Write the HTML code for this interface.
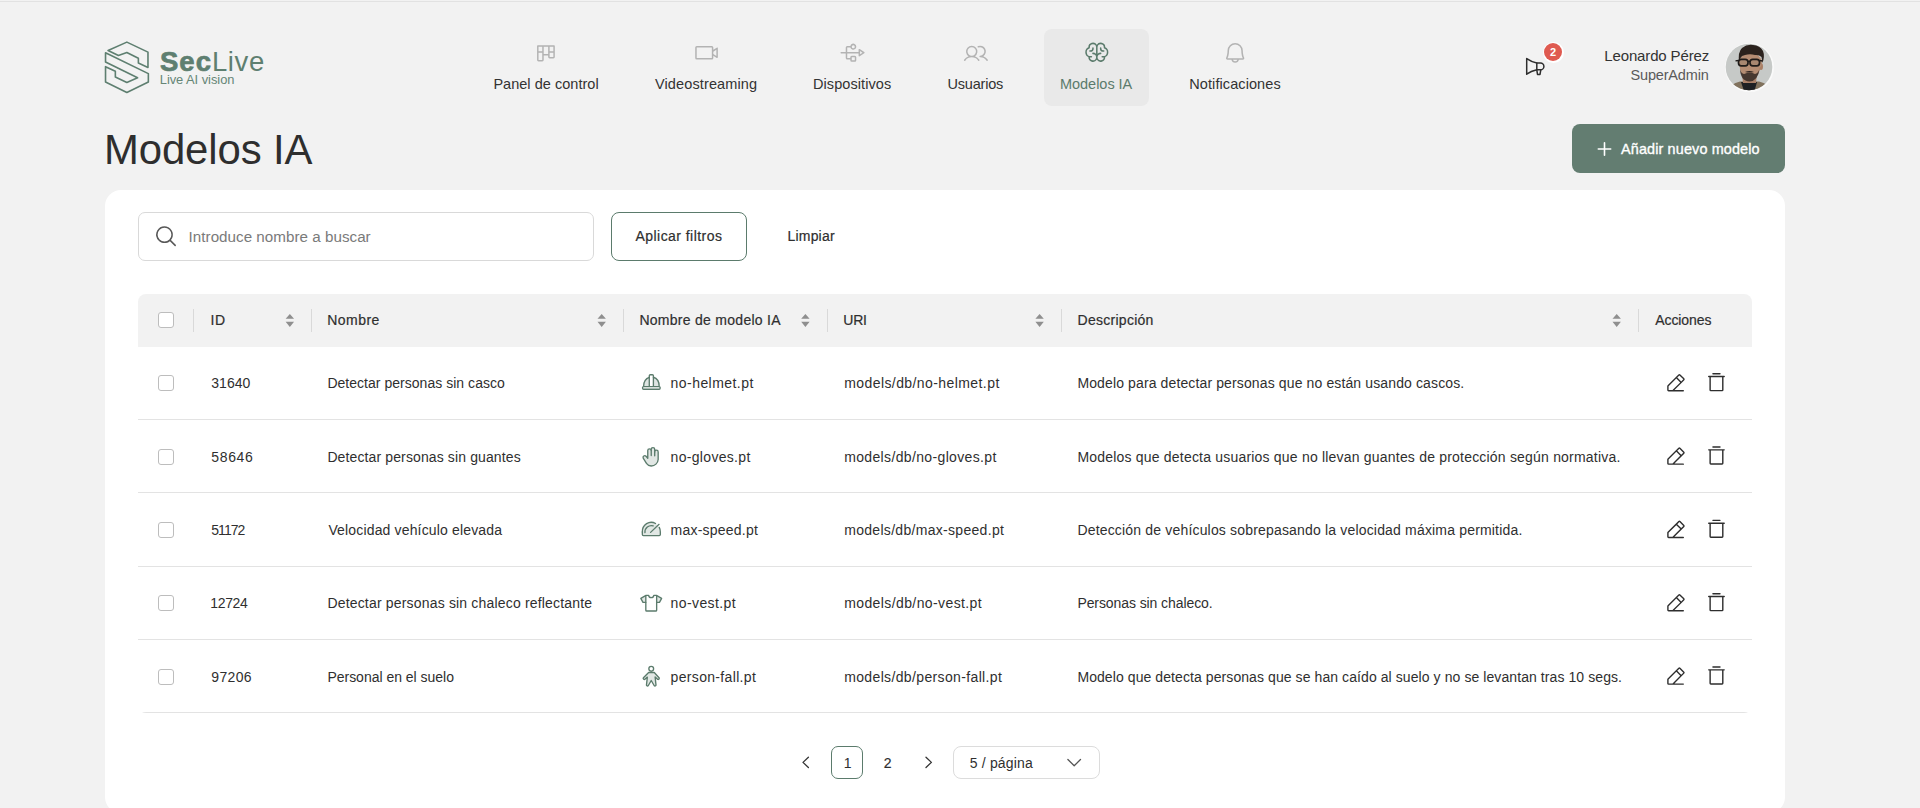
<!DOCTYPE html>
<html lang="es">
<head>
<meta charset="utf-8">
<title>SecLive - Modelos IA</title>
<style>
*{box-sizing:border-box;margin:0;padding:0}
html,body{width:1920px;height:808px;overflow:hidden}
body{position:relative;background:#f2f2f2;font-family:"Liberation Sans",sans-serif;color:#303030;font-size:14px}
.abs{position:absolute}
.t{position:absolute;white-space:pre}
svg{position:absolute;overflow:visible}
.topline{position:absolute;left:0;top:1px;width:1920px;height:1px;background:#e2e2e2}
.active-bg{position:absolute;left:1044.4px;top:28.7px;width:104.2px;height:77.3px;border-radius:8px;background:#e9e9e9}
.card{position:absolute;left:105px;top:189.5px;width:1680px;height:623px;background:#fff;border-radius:16px}
.inp{position:absolute;left:137.5px;top:212px;width:456.5px;height:49px;border:1px solid #d9d9d9;border-radius:7px;background:#fff}
.btn-o{position:absolute;left:610.5px;top:212px;width:136.5px;height:48.8px;border:1px solid #5b7b6c;border-radius:8px}
.table{position:absolute;left:137.5px;top:293.5px;width:1614.5px;height:419.9px;border-radius:8px;overflow:hidden}
.thead{position:absolute;left:0;top:0;width:100%;height:53.2px;background:#f2f2f2}
.row{position:absolute;left:0;width:100%;height:73.33px;border-bottom:1px solid #e3e3e3}
.cb{position:absolute;width:16px;height:16px;border:1px solid #bdbdbd;border-radius:3px;background:#fff}
.sep{position:absolute;top:15px;width:1px;height:23px;background:#d9d9d9}
</style>
</head>
<body>
<div class="topline"></div>
<div class="t" style="left:160px;top:47px;font-size:27.5px;line-height:30px;color:#5e7f70"><b style="letter-spacing:1.0px;-webkit-text-stroke:0.7px #5e7f70">Sec</b><span style="letter-spacing:0.6px">Live</span></div>
<div class="active-bg"></div>
<div class="abs" style="left:1542.5px;top:41.5px;width:21px;height:21px;border-radius:50%;background:#fff"></div>
<div class="abs" style="left:1544px;top:43px;width:18px;height:18px;border-radius:50%;background:#df5a50;color:#fff;font-weight:bold;font-size:11px;line-height:18px;text-align:center">2</div>
<div class="abs" style="left:1724.5px;top:42.5px;width:49px;height:49px;border-radius:50%;background:#fafafa"></div>
<svg width="48" height="48" style="left:1725px;top:43px" viewBox="0 0 48 48">
 <defs><clipPath id="av"><circle cx="24" cy="24" r="23.3"/></clipPath></defs>
 <g clip-path="url(#av)">
  <rect width="48" height="48" fill="#c6c9c7"/>
  <path d="M2,48 Q5,41 15,38.5 L34,38.5 Q44,41 47,48 Z" fill="#81725d"/>
  <path d="M16,39 L32,39 L29.5,48 L19,48 Z" fill="#1e2023"/>
  <path d="M17,30 L32,30 L31,40 L18,40 Z" fill="#a98068"/>
  <ellipse cx="25" cy="22.5" rx="10.3" ry="14" fill="#b58d73"/>
  <ellipse cx="36" cy="23.5" rx="2" ry="3.5" fill="#a97f66"/>
  <ellipse cx="25.5" cy="19.5" rx="11.3" ry="9.5" fill="#b58d73"/>
  <path d="M14.2,20 Q12.5,9 17,5 Q22,1 28,2 Q35,2.5 38,8 Q40,13 37.5,20 L36.5,14 Q34,11.5 30,12 Q25,10.5 20,12 Q16.5,12.5 15.5,15 Z" fill="#2b221d"/>
  <path d="M15,26 Q15.5,38 24.5,38.5 Q33,38 34.5,26 Q33,30.5 30,31 Q25,28.5 19,31 Q16,30.5 15,26 Z" fill="#3b2f29" fill-opacity="0.9"/>
  <path d="M20,29 Q24.5,27 29,29 Q24.5,30 20,29 Z" fill="#2f2520"/>
  <rect x="13.5" y="16.3" width="9.5" height="6.5" rx="2.8" fill="#a88770" stroke="#1f1b19" stroke-width="1.7"/>
  <rect x="25" y="16.3" width="9.5" height="6.5" rx="2.8" fill="#a88770" stroke="#1f1b19" stroke-width="1.7"/>
  <path d="M23,18.3 L25,18.3 M10.5,17.8 L13.5,17.5 M34.5,17.5 L37.5,18" stroke="#1f1b19" stroke-width="1.3"/>
 </g>
</svg>

<div class="abs" style="left:1572px;top:124.2px;width:213px;height:48.8px;border-radius:8px;background:#637d71"></div>
<div class="card"></div>
<div class="inp"></div>
<div class="btn-o"></div>
<div class="table">
 <div class="thead">
  <div class="cb" style="left:20.8px;top:18.6px"></div>
  <div class="sep" style="left:55.90px"></div>
  <div class="sep" style="left:173.50px"></div>
  <div class="sep" style="left:485.00px"></div>
  <div class="sep" style="left:689.00px"></div>
  <div class="sep" style="left:923.50px"></div>
  <div class="sep" style="left:1500.50px"></div>
 </div>
 <div class="row" style="top:53.20px"><div class="cb" style="left:20.8px;top:28.6px"></div></div>
 <div class="row" style="top:126.53px"><div class="cb" style="left:20.8px;top:28.6px"></div></div>
 <div class="row" style="top:199.86px"><div class="cb" style="left:20.8px;top:28.6px"></div></div>
 <div class="row" style="top:273.19px"><div class="cb" style="left:20.8px;top:28.6px"></div></div>
 <div class="row" style="top:346.52px"><div class="cb" style="left:20.8px;top:28.6px"></div></div>
</div>

<div class="abs" style="left:830.8px;top:746.3px;width:32.2px;height:32.5px;border:1px solid #5b7b6c;border-radius:7px"></div>
<div class="abs" style="left:953.4px;top:746.3px;width:146.4px;height:32.5px;border:1px solid #dcdcdc;border-radius:8px"></div>
<div class="t" style="left:493.40px;top:73.70px;font-size:14.5px;line-height:20px;color:#333;letter-spacing:0.029px;">Panel de control</div>
<div class="t" style="left:655.00px;top:73.70px;font-size:14.5px;line-height:20px;color:#333;letter-spacing:0.121px;">Videostreaming</div>
<div class="t" style="left:813.00px;top:73.70px;font-size:14.5px;line-height:20px;color:#333;letter-spacing:0.081px;">Dispositivos</div>
<div class="t" style="left:947.60px;top:73.70px;font-size:14.5px;line-height:20px;color:#333;letter-spacing:-0.223px;">Usuarios</div>
<div class="t" style="left:1060.00px;top:73.70px;font-size:14.5px;line-height:20px;color:#5b7b6c;letter-spacing:-0.029px;">Modelos IA</div>
<div class="t" style="left:1189.30px;top:73.70px;font-size:14.5px;line-height:20px;color:#333;letter-spacing:0.084px;">Notificaciones</div>
<div class="t" style="left:1604.30px;top:46.20px;font-size:15px;line-height:20px;color:#333;letter-spacing:-0.142px;">Leonardo Pérez</div>
<div class="t" style="left:1630.50px;top:64.60px;font-size:14.5px;line-height:20px;color:#5a5a5a;letter-spacing:-0.170px;">SuperAdmin</div>
<div class="t" style="left:104.00px;top:123.90px;font-size:41.9px;line-height:51px;color:#2e2e2e;letter-spacing:-0.124px;">Modelos IA</div>
<div class="t" style="left:1621.00px;top:139.00px;font-size:14.4px;line-height:20px;color:#fff;letter-spacing:0.145px;-webkit-text-stroke:0.35px #fff;">Añadir nuevo modelo</div>
<div class="t" style="left:188.60px;top:226.70px;font-size:15.2px;line-height:20px;color:#7a7a7a;letter-spacing:0.023px;">Introduce nombre a buscar</div>
<div class="t" style="left:635.50px;top:226.30px;font-size:14px;line-height:20px;color:#2f2f2f;letter-spacing:0.448px;-webkit-text-stroke:0.2px currentColor;">Aplicar filtros</div>
<div class="t" style="left:787.50px;top:226.30px;font-size:14px;line-height:20px;color:#2f2f2f;letter-spacing:0.193px;-webkit-text-stroke:0.2px currentColor;">Limpiar</div>
<div class="t" style="left:210.50px;top:310.10px;font-size:14px;line-height:20px;color:#2f2f2f;letter-spacing:0.610px;-webkit-text-stroke:0.2px currentColor;">ID</div>
<div class="t" style="left:327.30px;top:310.10px;font-size:14px;line-height:20px;color:#2f2f2f;letter-spacing:0.459px;-webkit-text-stroke:0.2px currentColor;">Nombre</div>
<div class="t" style="left:639.40px;top:310.10px;font-size:14px;line-height:20px;color:#2f2f2f;letter-spacing:0.278px;-webkit-text-stroke:0.2px currentColor;">Nombre de modelo IA</div>
<div class="t" style="left:843.30px;top:310.10px;font-size:14px;line-height:20px;color:#2f2f2f;letter-spacing:-0.260px;-webkit-text-stroke:0.2px currentColor;">URI</div>
<div class="t" style="left:1077.60px;top:310.10px;font-size:14px;line-height:20px;color:#2f2f2f;letter-spacing:0.265px;-webkit-text-stroke:0.2px currentColor;">Descripción</div>
<div class="t" style="left:1655.20px;top:310.10px;font-size:14px;line-height:20px;color:#2f2f2f;letter-spacing:-0.072px;-webkit-text-stroke:0.2px currentColor;">Acciones</div>
<div class="t" style="left:211.30px;top:373.20px;font-size:14px;line-height:20px;color:#2f2f2f;letter-spacing:0.014px;">31640</div>
<div class="t" style="left:327.40px;top:373.20px;font-size:14px;line-height:20px;color:#2f2f2f;letter-spacing:0.029px;">Detectar personas sin casco</div>
<div class="t" style="left:670.60px;top:373.20px;font-size:14px;line-height:20px;color:#2f2f2f;letter-spacing:0.443px;">no-helmet.pt</div>
<div class="t" style="left:844.20px;top:373.20px;font-size:14px;line-height:20px;color:#2f2f2f;letter-spacing:0.418px;">models/db/no-helmet.pt</div>
<div class="t" style="left:1077.40px;top:373.20px;font-size:14px;line-height:20px;color:#2f2f2f;letter-spacing:0.125px;">Modelo para detectar personas que no están usando cascos.</div>
<div class="t" style="left:211.30px;top:446.53px;font-size:14px;line-height:20px;color:#2f2f2f;letter-spacing:0.639px;">58646</div>
<div class="t" style="left:327.40px;top:446.53px;font-size:14px;line-height:20px;color:#2f2f2f;letter-spacing:0.122px;">Detectar personas sin guantes</div>
<div class="t" style="left:670.60px;top:446.53px;font-size:14px;line-height:20px;color:#2f2f2f;letter-spacing:0.311px;">no-gloves.pt</div>
<div class="t" style="left:844.20px;top:446.53px;font-size:14px;line-height:20px;color:#2f2f2f;letter-spacing:0.354px;">models/db/no-gloves.pt</div>
<div class="t" style="left:1077.40px;top:446.53px;font-size:14px;line-height:20px;color:#2f2f2f;letter-spacing:0.200px;">Modelos que detecta usuarios que no llevan guantes de protección según normativa.</div>
<div class="t" style="left:211.30px;top:519.86px;font-size:14px;line-height:20px;color:#2f2f2f;letter-spacing:-0.976px;">51172</div>
<div class="t" style="left:328.40px;top:519.86px;font-size:14px;line-height:20px;color:#2f2f2f;letter-spacing:0.156px;">Velocidad vehículo elevada</div>
<div class="t" style="left:670.60px;top:519.86px;font-size:14px;line-height:20px;color:#2f2f2f;letter-spacing:0.224px;">max-speed.pt</div>
<div class="t" style="left:844.20px;top:519.86px;font-size:14px;line-height:20px;color:#2f2f2f;letter-spacing:0.304px;">models/db/max-speed.pt</div>
<div class="t" style="left:1077.40px;top:519.86px;font-size:14px;line-height:20px;color:#2f2f2f;letter-spacing:0.176px;">Detección de vehículos sobrepasando la velocidad máxima permitida.</div>
<div class="t" style="left:210.30px;top:593.19px;font-size:14px;line-height:20px;color:#2f2f2f;letter-spacing:-0.361px;">12724</div>
<div class="t" style="left:327.40px;top:593.19px;font-size:14px;line-height:20px;color:#2f2f2f;letter-spacing:0.178px;">Detectar personas sin chaleco reflectante</div>
<div class="t" style="left:670.60px;top:593.19px;font-size:14px;line-height:20px;color:#2f2f2f;letter-spacing:0.390px;">no-vest.pt</div>
<div class="t" style="left:844.20px;top:593.19px;font-size:14px;line-height:20px;color:#2f2f2f;letter-spacing:0.396px;">models/db/no-vest.pt</div>
<div class="t" style="left:1077.40px;top:593.19px;font-size:14px;line-height:20px;color:#2f2f2f;letter-spacing:-0.084px;">Personas sin chaleco.</div>
<div class="t" style="left:211.30px;top:666.52px;font-size:14px;line-height:20px;color:#2f2f2f;letter-spacing:0.339px;">97206</div>
<div class="t" style="left:327.40px;top:666.52px;font-size:14px;line-height:20px;color:#2f2f2f;letter-spacing:-0.014px;">Personal en el suelo</div>
<div class="t" style="left:670.60px;top:666.52px;font-size:14px;line-height:20px;color:#2f2f2f;letter-spacing:0.328px;">person-fall.pt</div>
<div class="t" style="left:844.20px;top:666.52px;font-size:14px;line-height:20px;color:#2f2f2f;letter-spacing:0.360px;">models/db/person-fall.pt</div>
<div class="t" style="left:1077.40px;top:666.52px;font-size:14px;line-height:20px;color:#2f2f2f;letter-spacing:0.082px;">Modelo que detecta personas que se han caído al suelo y no se levantan tras 10 segs.</div>
<div class="t" style="left:843.70px;top:752.50px;font-size:14px;line-height:20px;color:#2f2f2f;">1</div>
<div class="t" style="left:883.70px;top:752.50px;font-size:14px;line-height:20px;color:#2f2f2f;-webkit-text-stroke:0.2px currentColor;">2</div>
<div class="t" style="left:969.80px;top:752.50px;font-size:14px;line-height:20px;color:#2f2f2f;letter-spacing:0.166px;">5 / página</div>
<div class="t" style="left:159.75px;top:70.25px;font-size:12.9px;line-height:20px;color:#668676;letter-spacing:-0.041px;">Live AI vision</div>
<!-- ICON OVERLAY -->
<svg width="1920" height="808" style="left:0;top:0;pointer-events:none" viewBox="0 0 1920 808">
 <!-- logo -->
 <g fill="none" stroke="#5e7f70" stroke-width="1.6" stroke-linejoin="round">
  <path d="M108.06,50.43 L126.86,42.14 L147.97,52.12 L147.97,67.47 L138.37,63.01 L138.37,58.26 L126.86,52.5 L118.42,55.57 Z"/>
  <path d="M105.53,62.09 L137.6,77.83 L126.86,82.43 L115.35,77.06 L115.35,71.3 L105.53,66.7 L105.53,82.05 L126.86,92.41 L148.35,82.05 L148.35,73.6 L105.53,52.73 Z"/>
 </g>
 <path fill="#8f8f8f" d="M285.65,318.8 L289.85,313.9 L294.05,318.8 Z M285.65,321.8 L294.05,321.8 L289.85,326.9 Z"/>
 <path fill="#8f8f8f" d="M597.50,318.8 L601.70,313.9 L605.90,318.8 Z M597.50,321.8 L605.90,321.8 L601.70,326.9 Z"/>
 <path fill="#8f8f8f" d="M801.20,318.8 L805.40,313.9 L809.60,318.8 Z M801.20,321.8 L809.60,321.8 L805.40,326.9 Z"/>
 <path fill="#8f8f8f" d="M1035.40,318.8 L1039.60,313.9 L1043.80,318.8 Z M1035.40,321.8 L1043.80,321.8 L1039.60,326.9 Z"/>
 <path fill="#8f8f8f" d="M1612.50,318.8 L1616.70,313.9 L1620.90,318.8 Z M1612.50,321.8 L1620.90,321.8 L1616.70,326.9 Z"/>
 <path fill="#585858" transform="translate(153.8,224) scale(0.0955)" d="M229.66,218.34l-50.07-50.06a88.11,88.11,0,1,0-11.31,11.31l50.06,50.07a8,8,0,0,0,11.32-11.32ZM40,112a72,72,0,1,1,72,72A72.08,72.08,0,0,1,40,112Z"/>
 <g transform="translate(630,365.00) scale(0.043337)" fill="none" stroke="#5b7b6c" stroke-width="31" stroke-linecap="round" stroke-linejoin="round"><path d="M315,485 A179,212 0 0 1 673,485 Z" fill="#5b7b6c" fill-opacity="0.2" stroke="none"/><path d="M445,485 L445,250 Q445,225 470,225 L515,225 Q540,225 540,250 L540,485" fill="#fff"/><path d="M315,485 A179,212 0 0 1 445,283 M540,283 A179,212 0 0 1 673,485"/><rect x="290" y="500" width="405" height="60" rx="22" fill="#fff"/></g>
 <g transform="translate(630,440.00) scale(0.043337)" fill="none" stroke="#5b7b6c" stroke-width="31" stroke-linecap="round" stroke-linejoin="round"><path d="M410,420 L410,245 A40,40 0 0 1 490,245 L490,215 A40,40 0 0 1 570,215 L570,275 A40,40 0 0 1 650,275 L650,450 A160,160 0 0 1 490,600 Q420,600 380,540 L305,420 A40,40 0 0 1 370,375 Z" fill="#5b7b6c" fill-opacity="0.18"/><path d="M490,245 L490,360 M570,275 L570,365"/></g>
 <g transform="translate(630,512.00) scale(0.043337)" fill="none" stroke="#5b7b6c" stroke-width="31" stroke-linecap="round" stroke-linejoin="round"><path d="M285,520 L285,460 A205,215 0 0 1 700,460 L700,520 Q700,545 675,545 L310,545 Q285,545 285,520 Z" fill="#5b7b6c" fill-opacity="0.18" stroke="none"/><path d="M285,460 A205,215 0 0 1 590,265"/><path d="M675,355 A205,215 0 0 1 700,460 L700,520 Q700,545 675,545 L310,545 Q285,545 285,520 L285,460"/><path d="M345,475 A150,150 0 0 1 535,320"/><path d="M475,470 L670,285"/></g>
 <g transform="translate(630,585.00) scale(0.043337)" fill="none" stroke="#5b7b6c" stroke-width="31" stroke-linecap="round" stroke-linejoin="round"><path d="M365,255 L250,310 L300,400 L365,400 Z M615,255 L730,310 L680,400 L615,400 Z" fill="#5b7b6c" fill-opacity="0.18" stroke="none"/><path d="M430,240 C440,310 540,310 550,240 L610,240 L730,310 L680,400 L615,400 L615,580 Q615,600 595,600 L385,600 Q365,600 365,580 L365,400 L300,400 L250,310 L370,240 Z"/><path d="M365,255 L365,400 M615,255 L615,400"/></g>
 <g transform="translate(630,658.00) scale(0.043337)" fill="none" stroke="#5b7b6c" stroke-width="31" stroke-linecap="round" stroke-linejoin="round"><circle cx="490" cy="250" r="55"/><path d="M430,335 L560,335 L670,455 A25,25 0 0 1 630,485 L580,440 L600,625 A25,25 0 0 1 560,640 L490,520 L420,640 A25,25 0 0 1 380,625 L400,440 L350,485 A25,25 0 0 1 310,455 Z" fill="#5b7b6c" fill-opacity="0.18"/></g>
 <path fill="#2e2e2e" transform="translate(1664.4,371.90) scale(0.0875)" d="M227.32,73.37,182.63,28.69a16,16,0,0,0-22.63,0L36.69,152A15.86,15.86,0,0,0,32,163.31V208a16,16,0,0,0,16,16H216a8,8,0,0,0,0-16H115.32l112-112A16,16,0,0,0,227.32,73.37ZM92.69,208H48V163.31l88-88L180.69,120ZM192,108.69,147.32,64l24-24L216,84.69Z"/>
 <path fill="#2e2e2e" transform="translate(1705.2,371.60) scale(0.088)" d="M216,48H40a8,8,0,0,0,0,16h8V208a16,16,0,0,0,16,16H192a16,16,0,0,0,16-16V64h8a8,8,0,0,0,0-16ZM192,208H64V64H192ZM80,24a8,8,0,0,1,8-8h80a8,8,0,0,1,0,16H88A8,8,0,0,1,80,24Z"/>
 <path fill="#2e2e2e" transform="translate(1664.4,445.23) scale(0.0875)" d="M227.32,73.37,182.63,28.69a16,16,0,0,0-22.63,0L36.69,152A15.86,15.86,0,0,0,32,163.31V208a16,16,0,0,0,16,16H216a8,8,0,0,0,0-16H115.32l112-112A16,16,0,0,0,227.32,73.37ZM92.69,208H48V163.31l88-88L180.69,120ZM192,108.69,147.32,64l24-24L216,84.69Z"/>
 <path fill="#2e2e2e" transform="translate(1705.2,444.93) scale(0.088)" d="M216,48H40a8,8,0,0,0,0,16h8V208a16,16,0,0,0,16,16H192a16,16,0,0,0,16-16V64h8a8,8,0,0,0,0-16ZM192,208H64V64H192ZM80,24a8,8,0,0,1,8-8h80a8,8,0,0,1,0,16H88A8,8,0,0,1,80,24Z"/>
 <path fill="#2e2e2e" transform="translate(1664.4,518.56) scale(0.0875)" d="M227.32,73.37,182.63,28.69a16,16,0,0,0-22.63,0L36.69,152A15.86,15.86,0,0,0,32,163.31V208a16,16,0,0,0,16,16H216a8,8,0,0,0,0-16H115.32l112-112A16,16,0,0,0,227.32,73.37ZM92.69,208H48V163.31l88-88L180.69,120ZM192,108.69,147.32,64l24-24L216,84.69Z"/>
 <path fill="#2e2e2e" transform="translate(1705.2,518.26) scale(0.088)" d="M216,48H40a8,8,0,0,0,0,16h8V208a16,16,0,0,0,16,16H192a16,16,0,0,0,16-16V64h8a8,8,0,0,0,0-16ZM192,208H64V64H192ZM80,24a8,8,0,0,1,8-8h80a8,8,0,0,1,0,16H88A8,8,0,0,1,80,24Z"/>
 <path fill="#2e2e2e" transform="translate(1664.4,591.89) scale(0.0875)" d="M227.32,73.37,182.63,28.69a16,16,0,0,0-22.63,0L36.69,152A15.86,15.86,0,0,0,32,163.31V208a16,16,0,0,0,16,16H216a8,8,0,0,0,0-16H115.32l112-112A16,16,0,0,0,227.32,73.37ZM92.69,208H48V163.31l88-88L180.69,120ZM192,108.69,147.32,64l24-24L216,84.69Z"/>
 <path fill="#2e2e2e" transform="translate(1705.2,591.59) scale(0.088)" d="M216,48H40a8,8,0,0,0,0,16h8V208a16,16,0,0,0,16,16H192a16,16,0,0,0,16-16V64h8a8,8,0,0,0,0-16ZM192,208H64V64H192ZM80,24a8,8,0,0,1,8-8h80a8,8,0,0,1,0,16H88A8,8,0,0,1,80,24Z"/>
 <path fill="#2e2e2e" transform="translate(1664.4,665.22) scale(0.0875)" d="M227.32,73.37,182.63,28.69a16,16,0,0,0-22.63,0L36.69,152A15.86,15.86,0,0,0,32,163.31V208a16,16,0,0,0,16,16H216a8,8,0,0,0,0-16H115.32l112-112A16,16,0,0,0,227.32,73.37ZM92.69,208H48V163.31l88-88L180.69,120ZM192,108.69,147.32,64l24-24L216,84.69Z"/>
 <path fill="#2e2e2e" transform="translate(1705.2,664.92) scale(0.088)" d="M216,48H40a8,8,0,0,0,0,16h8V208a16,16,0,0,0,16,16H192a16,16,0,0,0,16-16V64h8a8,8,0,0,0,0-16ZM192,208H64V64H192ZM80,24a8,8,0,0,1,8-8h80a8,8,0,0,1,0,16H88A8,8,0,0,1,80,24Z"/>
 <g fill="none" stroke="#333" stroke-width="1.3" stroke-linecap="round" stroke-linejoin="round"><path d="M808.4,757.3 L803,762.4 L808.4,767.5"/><path d="M926,757.3 L931.4,762.4 L926,767.5"/><path d="M1067.9,759.5 L1074.2,765.8 L1080.5,759.5" stroke="#555"/></g>
 <!-- megaphone -->
 <g fill="none" stroke="#2e2e2e" stroke-width="1.5" stroke-linejoin="round" stroke-linecap="round">
  <path d="M1526.7,58.6 Q1531,61.6 1536.8,63 L1536.8,69.8 Q1531,71 1526.7,74.2 Z"/>
  <path d="M1536.8,63 L1540.5,63 A3.4,3.4 0 0 1 1540.5,69.8 L1536.8,69.8"/>
  <path d="M1536.8,69.8 L1537.5,74.4 L1540,74.4 L1540.8,69.8"/>
 </g>
 <!-- plus -->
 <g stroke="#fff" stroke-width="1.6" stroke-linecap="round"><path d="M1604.5,142.8 V155.2 M1598.3,149 H1610.7"/></g>
 <!-- nav icons -->
 <g fill="#b3b3b3">
  <path transform="translate(534.1,40.8) scale(0.0925)" d="M216,48H40a8,8,0,0,0-8,8V208a16,16,0,0,0,16,16H88a16,16,0,0,0,16-16V160h48v16a16,16,0,0,0,16,16h40a16,16,0,0,0,16-16V56A8,8,0,0,0,216,48ZM88,208H48V128H88Zm0-96H48V64H88Zm64,32H104V64h48Zm56,32H168V128h40Zm0-64H168V64h40Z"/>
  <path transform="translate(693.7,40.7) scale(0.0944)" d="M251.77,73a8,8,0,0,0-8.21.39L208,97.05V72a16,16,0,0,0-16-16H32A16,16,0,0,0,16,72V184a16,16,0,0,0,16,16H192a16,16,0,0,0,16-16V159l35.56,23.71A8,8,0,0,0,248,184a8,8,0,0,0,8-8V80A8,8,0,0,0,251.77,73ZM192,184H32V72H192V184Zm48-22.95-32-21.33V116.28L240,95Z"/>
  <path transform="translate(840.45,40.6) scale(0.0943)" d="M252.44,121.34l-48-32A8,8,0,0,0,192,96v24H72V72h33a32,32,0,1,0,0-16H72A16,16,0,0,0,56,72v48H8a8,8,0,0,0,0,16H56v48a16,16,0,0,0,16,16h32v8a16,16,0,0,0,16,16h32a16,16,0,0,0,16-16V176a16,16,0,0,0-16-16H120a16,16,0,0,0-16,16v8H72V136H192v24a8,8,0,0,0,12.44,6.66l48-32a8,8,0,0,0,0-13.32ZM136,48a16,16,0,1,1-16,16A16,16,0,0,1,136,48Zm16,128v32H120V176Zm56-30.95V111l25.58,17Z"/>
  <path transform="translate(963.7,41.1) scale(0.0956)" d="M117.25,157.92a60,60,0,1,0-66.5,0A95.83,95.83,0,0,0,3.53,195.63a8,8,0,1,0,13.4,8.74,80,80,0,0,1,134.14,0,8,8,0,0,0,13.4-8.74A95.83,95.83,0,0,0,117.25,157.92ZM40,108a44,44,0,1,1,44,44A44.05,44.05,0,0,1,40,108Zm210.14,98.7a8,8,0,0,1-11.07-2.33A79.83,79.83,0,0,0,172,168a8,8,0,0,1,0-16,44,44,0,1,0-16.34-84.870,8,8,0,1,1-5.94-14.85,60,60,0,0,1,55.53,105.64,95.83,95.83,0,0,1,47.22,37.71A8,8,0,0,1,250.14,206.7Z"/>
  <path transform="translate(1222.94,40.6) scale(0.0955)" d="M221.8,175.94C216.25,166.38,208,139.33,208,104a80,80,0,1,0-160,0c0,35.34-8.26,62.38-13.81,71.940A16,16,0,0,0,48,200H88.81a40,40,0,0,0,78.38,0H208a16,16,0,0,0,13.8-24.06ZM128,216a24,24,0,0,1-22.62-16h45.24A24,24,0,0,1,128,216ZM48,184c7.7-13.24,16-43.92,16-80a64,64,0,1,1,128,0c0,36.05,8.28,66.73,16,80Z"/>
 </g>
 <path fill="#5b7b6c" transform="translate(1084.5,40.3) scale(0.0962)" d="M248,124a56.11,56.11,0,0,0-32-50.61V72a48,48,0,0,0-88-26.49A48,48,0,0,0,40,72v1.39a56,56,0,0,0,0,101.2V176a48,48,0,0,0,88,26.49A48,48,0,0,0,216,176v-1.41A56.09,56.09,0,0,0,248,124ZM88,208a32,32,0,0,1-31.81-28.56A55.87,55.87,0,0,0,64,180h8a8,8,0,0,0,0-16H64A40,40,0,0,1,50.67,86.27,8,8,0,0,0,56,78.73V72a32,32,0,0,1,64,0v68.26A47.8,47.8,0,0,0,88,128a8,8,0,0,0,0,16,32,32,0,0,1,0,64Zm104-44h-8a8,8,0,0,0,0,16h8a55.87,55.87,0,0,0,7.81-.56A32,32,0,1,1,168,144a8,8,0,0,0,0-16,47.8,47.8,0,0,0-32,12.26V72a32,32,0,0,1,64,0v6.73a8,8,0,0,0,5.33,7.54A40,40,0,0,1,192,164Zm16-52a8,8,0,0,1-8,8h-4a36,36,0,0,1-36-36V80a8,8,0,0,1,16,0v4a20,20,0,0,0,20,20h4A8,8,0,0,1,208,112ZM60,120H56a8,8,0,0,1,0-16h4A20,20,0,0,0,80,84V80a8,8,0,0,1,16,0v4A36,36,0,0,1,60,120Z"/>
</svg>
</body>
</html>
